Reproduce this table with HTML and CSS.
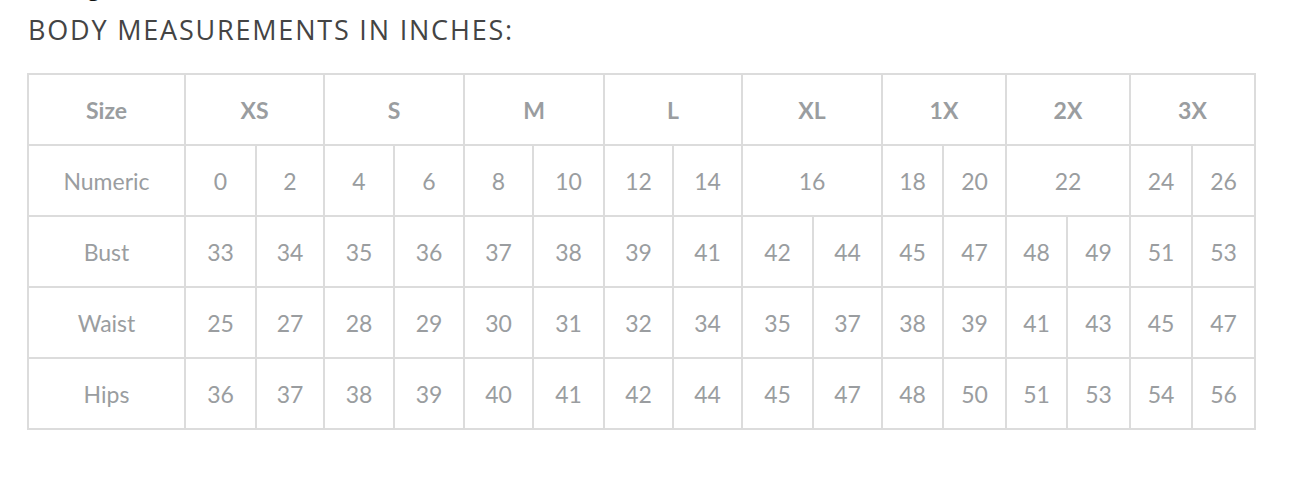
FILE: index.html
```html
<!DOCTYPE html>
<html lang="en">
<head>
<meta charset="utf-8">
<title>Body measurements</title>
<link rel="stylesheet" href="styles.css">
</head>
<body>
<main class="page">
  <h2 class="cut">Sizing</h2>
  <h3 class="title">BODY MEASUREMENTS IN INCHES:</h3>
  <div class="chart">
    <div class="cell head">Size</div>
    <div class="cell head s2">XS</div>
    <div class="cell head s2">S</div>
    <div class="cell head s2">M</div>
    <div class="cell head s2">L</div>
    <div class="cell head s2">XL</div>
    <div class="cell head s2">1X</div>
    <div class="cell head s2">2X</div>
    <div class="cell head s2">3X</div>

    <div class="cell label">Numeric</div>
    <div class="cell">0</div><div class="cell">2</div>
    <div class="cell">4</div><div class="cell">6</div>
    <div class="cell">8</div><div class="cell">10</div>
    <div class="cell">12</div><div class="cell">14</div>
    <div class="cell s2">16</div>
    <div class="cell">18</div><div class="cell">20</div>
    <div class="cell s2">22</div>
    <div class="cell">24</div><div class="cell">26</div>

    <div class="cell label">Bust</div>
    <div class="cell">33</div><div class="cell">34</div>
    <div class="cell">35</div><div class="cell">36</div>
    <div class="cell">37</div><div class="cell">38</div>
    <div class="cell">39</div><div class="cell">41</div>
    <div class="cell">42</div><div class="cell">44</div>
    <div class="cell">45</div><div class="cell">47</div>
    <div class="cell">48</div><div class="cell">49</div>
    <div class="cell">51</div><div class="cell">53</div>

    <div class="cell label">Waist</div>
    <div class="cell">25</div><div class="cell">27</div>
    <div class="cell">28</div><div class="cell">29</div>
    <div class="cell">30</div><div class="cell">31</div>
    <div class="cell">32</div><div class="cell">34</div>
    <div class="cell">35</div><div class="cell">37</div>
    <div class="cell">38</div><div class="cell">39</div>
    <div class="cell">41</div><div class="cell">43</div>
    <div class="cell">45</div><div class="cell">47</div>

    <div class="cell label">Hips</div>
    <div class="cell">36</div><div class="cell">37</div>
    <div class="cell">38</div><div class="cell">39</div>
    <div class="cell">40</div><div class="cell">41</div>
    <div class="cell">42</div><div class="cell">44</div>
    <div class="cell">45</div><div class="cell">47</div>
    <div class="cell">48</div><div class="cell">50</div>
    <div class="cell">51</div><div class="cell">53</div>
    <div class="cell">54</div><div class="cell">56</div>
  </div>
</main>
</body>
</html>
```
FILE: styles.css
```css
* { box-sizing: border-box; }
html, body { margin: 0; padding: 0; background: #fff; }
body { overflow: hidden; }
.page {
  display: flex;
  flex-direction: column;
  align-items: flex-start;
  padding-left: 27px;
}
.cut {
  margin: -21px 0 0 15px;
  font-family: "Open Sans", sans-serif;
  font-weight: 700;
  font-size: 20px;
  line-height: 20px;
  height: 20px;
  color: #111;
}
.title {
  margin: 15px 0 0 1px;
  font-family: "Open Sans", sans-serif;
  font-weight: 400;
  font-size: 27px;
  line-height: 32px;
  color: #444;
  letter-spacing: 1.8px;
}
.chart {
  margin-top: 27px;
  display: grid;
  grid-template-columns: 157px 71px 68px 70px 70px 69px 71px 69px 69px 71px 69px 61px 63px 61px 63px 62px 63px;
  grid-auto-rows: 71px;
  border-top: 2px solid #dcdcdc;
  border-left: 2px solid #dcdcdc;
}
.cell {
  display: flex;
  align-items: center;
  justify-content: center;
  border-right: 2px solid #dcdcdc;
  border-bottom: 2px solid #dcdcdc;
  font-family: Lato, "Open Sans", sans-serif;
  font-size: 23px;
  color: #9a9da0;
}
.s2 { grid-column: span 2; }
.head { font-weight: 700; }
```
